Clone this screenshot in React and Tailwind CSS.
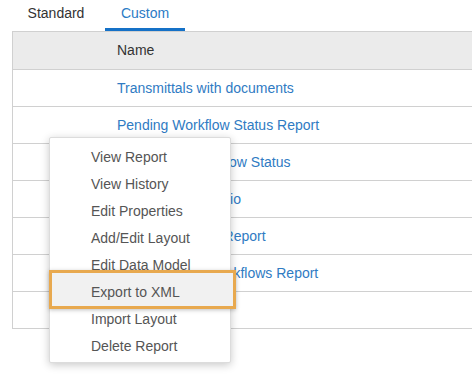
import React from "react";

const rows = [
  "Transmittals with documents",
  "Pending Workflow Status Report",
  "Transmittal Workflow Status",
  "Transmittal Portfolio",
  "Overdue Actions Report",
  "All Completed Workflows Report",
  "",
];

const menuItems = [
  "View Report",
  "View History",
  "Edit Properties",
  "Add/Edit Layout",
  "Edit Data Model",
  "Export to XML",
  "Import Layout",
  "Delete Report",
];

export default function App() {
  return (
    <div
      className="relative w-[472px] h-[375px] overflow-hidden bg-white text-[14px]"
      style={{ fontFamily: '"Liberation Sans", Arial, sans-serif' }}
    >
      <div className="flex h-[31px]">
        <div className="ml-[16px] w-[80px] h-[31px] flex items-center justify-center pb-[4px] text-[#333]">
          Standard
        </div>
        <div className="ml-[9px] w-[80px] h-[31px] flex items-center justify-center border-b-[3px] border-[#1571c7] pb-[1px] text-[#2b7bc5]">
          Custom
        </div>
      </div>

      <div className="ml-[12px] border-l border-t border-[#d0d0d0]">
        <div className="h-[38px] bg-[#ebebeb] border-b border-[#d0d0d0] flex items-center pl-[104px] text-[#333]">
          Name
        </div>
        {rows.map((r, i) => (
          <div
            key={i}
            className="h-[37px] border-b border-[#d0d0d0] flex items-center pl-[104px] text-[#2f7bc3]"
          >
            {r}
          </div>
        ))}
      </div>

      {/* context menu */}
      <div className="absolute left-[49px] top-[137px] w-[182px] h-[226px] bg-white border border-[#dcdcdc] rounded-[2px] shadow-[0_2px_8px_rgba(0,0,0,0.22)] pt-[6px]">
        {menuItems.map((m) => (
          <div key={m} className="relative h-[27px] flex items-center pl-[41px] text-[#555]">
            {m === "Export to XML" && (
              <span className="absolute left-[-1px] top-[-9px] w-[187px] h-[39px] border-[3px] border-[#e8a94f] bg-[#f1f1f1] shadow-[0_1px_4px_rgba(0,0,0,0.25)]" />
            )}
            <span className="relative">{m}</span>
          </div>
        ))}
      </div>
    </div>
  );
}
